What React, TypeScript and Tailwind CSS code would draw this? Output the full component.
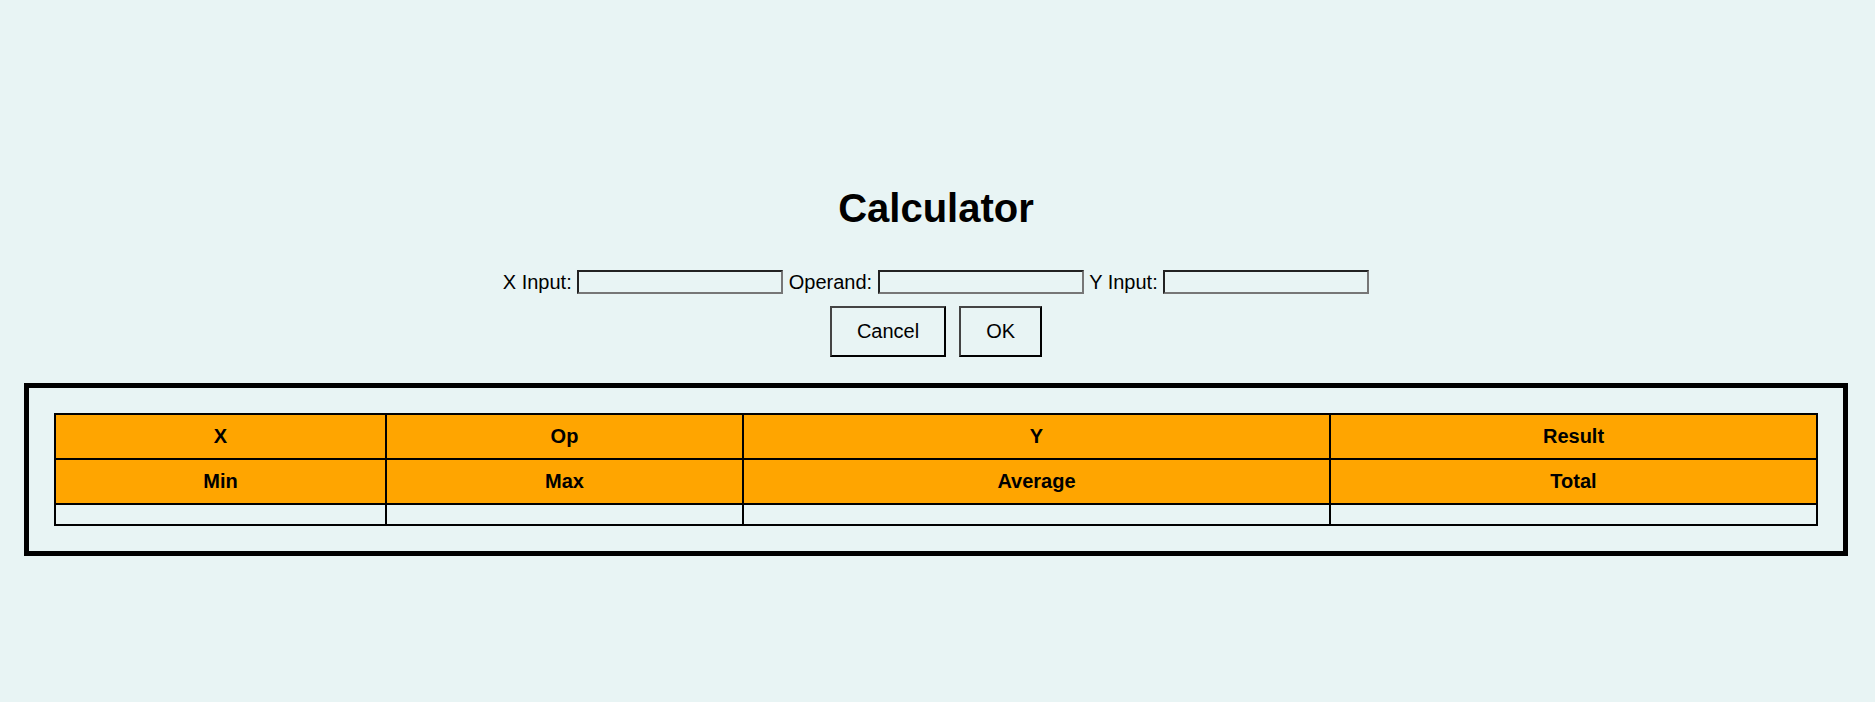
import { useState } from 'react';

const headRows = [
  ['X', 'Op', 'Y', 'Result'],
  ['Min', 'Max', 'Average', 'Total'],
];

const inputCls =
  'w-[206px] h-[24px] border-2 border-t-[#222] border-l-[#222] border-r-[#767676] border-b-[#767676] bg-transparent px-1 text-[20px] outline-none';

const buttonCls =
  'h-[51px] px-[25px] border-2 border-t-[#444] border-l-[#444] border-r-black border-b-black bg-transparent text-[20px] leading-[23px] text-black';

export default function App() {
  const [x, setX] = useState('');
  const [op, setOp] = useState('');
  const [y, setY] = useState('');

  return (
    <div className="min-h-screen bg-[#e8f4f4] font-['Liberation_Sans',Arial,sans-serif] text-black pt-[185px] pl-[24px] pr-[27px] pb-10">
      <h1 className="text-center text-[40px] leading-[46px] font-bold">Calculator</h1>

      <div className="mt-[39px] flex items-center justify-center gap-[5.5px] text-[20px] leading-[23px]">
        <label htmlFor="x">X Input:</label>
        <input id="x" className={inputCls} value={x} onChange={(e) => setX(e.target.value)} />
        <label htmlFor="op">Operand:</label>
        <input id="op" className={inputCls} value={op} onChange={(e) => setOp(e.target.value)} />
        <label htmlFor="y">Y Input:</label>
        <input id="y" className={inputCls} value={y} onChange={(e) => setY(e.target.value)} />
      </div>

      <div className="mt-[12px] flex justify-center gap-[13px]">
        <button className={buttonCls}>Cancel</button>
        <button className={buttonCls}>OK</button>
      </div>

      <div className="mt-[26px] border-[5px] border-black p-[25px]">
        <table className="w-full table-fixed border-collapse text-[20px] leading-[23px]">
          <colgroup>
            <col className="w-[331px]" />
            <col className="w-[357px]" />
            <col className="w-[587px]" />
            <col />
          </colgroup>
          <tbody>
            {headRows.map((row, i) => (
              <tr key={i}>
                {row.map((cell) => (
                  <th key={cell} className="border-2 border-black bg-[#ffa500] py-[10px] text-center font-bold">
                    {cell}
                  </th>
                ))}
              </tr>
            ))}
            <tr>
              {[0, 1, 2, 3].map((i) => (
                <td key={i} className="h-[21px] border-2 border-black p-0" />
              ))}
            </tr>
          </tbody>
        </table>
      </div>
    </div>
  );
}
